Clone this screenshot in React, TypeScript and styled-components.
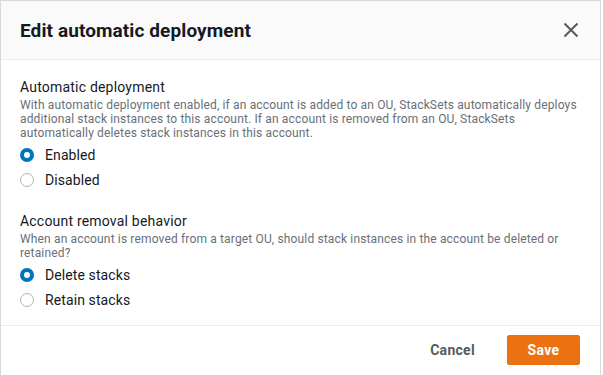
import { useState } from 'react';
import styled, { createGlobalStyle } from 'styled-components';

const TEXT = {
  title: 'Edit automatic deployment',
  deployLabel: 'Automatic deployment',
  deployHint:
    'With automatic deployment enabled, if an account is added to an OU, StackSets automatically deploys additional stack instances to this account. If an account is removed from an OU, StackSets automatically deletes stack instances in this account.',
  removalLabel: 'Account removal behavior',
  removalHint:
    'When an account is removed from a target OU, should stack instances in the account be deleted or retained?',
  cancel: 'Cancel',
  save: 'Save',
} as const;

const GlobalStyle = createGlobalStyle`
  body {
    margin: 0;
    background: #ffffff;
    font-family: Roboto, "Liberation Sans", sans-serif;
  }
`;

const Modal = styled.div`
  width: 601px;
  height: 375px;
  box-sizing: border-box;
  border: 1px solid #d5dbdb;
  border-bottom: none;
  background: #ffffff;
  display: flex;
  flex-direction: column;
`;

const Header = styled.header`
  height: 59px;
  box-sizing: border-box;
  display: flex;
  align-items: center;
  justify-content: space-between;
  padding: 0 21px 0 19px;
  background: #fafafa;
  border-bottom: 1px solid #eaeded;
`;

const Title = styled.h2`
  margin: 0;
  font-size: 19px;
  font-weight: 700;
  letter-spacing: 0.1px;
  color: #16191f;
`;

const CloseButton = styled.button`
  display: flex;
  padding: 0;
  border: none;
  background: none;
  color: #545b64;
  cursor: pointer;
`;

const Body = styled.div`
  padding: 17px 20px 0 19px;
  height: 266px;
  box-sizing: border-box;
  border-bottom: 1px solid #eaeded;
  display: flex;
  flex-direction: column;
  gap: 19px;
`;

const Field = styled.fieldset`
  margin: 0;
  padding: 0;
  border: none;
`;

const Label = styled.legend`
  padding: 0;
  font-size: 14px;
  line-height: 20px;
  letter-spacing: 0.2px;
  color: #16191f;
`;

const Hint = styled.p`
  margin: 1px 0 2px;
  font-size: 12px;
  line-height: 14px;
  letter-spacing: 0.15px;
  color: #687078;
`;

const Option = styled.label`
  display: flex;
  align-items: center;
  gap: 11px;
  height: 25px;
  font-size: 14px;
  letter-spacing: 0.1px;
  color: #16191f;
  cursor: pointer;
`;

const Dot = styled.span<{ $checked: boolean }>`
  width: 14px;
  height: 14px;
  box-sizing: border-box;
  border-radius: 50%;
  background: #ffffff;
  border: ${(p) => (p.$checked ? '4px solid #0073bb' : '1px solid #aab7b8')};
`;

const Footer = styled.footer`
  display: flex;
  justify-content: flex-end;
  align-items: center;
  gap: 12px;
  padding: 9px 20px 0;
`;

const LinkButton = styled.button`
  padding: 7px 20px;
  border: none;
  background: none;
  font-family: inherit;
  font-size: 14px;
  font-weight: 700;
  letter-spacing: 0.3px;
  color: #545b64;
  cursor: pointer;
`;

const PrimaryButton = styled.button`
  width: 73px;
  height: 30px;
  border: 1px solid #ec7211;
  border-radius: 2px;
  background: #ec7211;
  font-family: inherit;
  font-size: 14px;
  font-weight: 700;
  letter-spacing: 0.3px;
  color: #ffffff;
  cursor: pointer;
`;

type RadioGroupProps = {
  value: string;
  options: { value: string; label: string }[];
  onChange: (v: string) => void;
};

const RadioGroup = ({ value, options, onChange }: RadioGroupProps) => (
  <>
    {options.map((o) => (
      <Option key={o.value} onClick={() => onChange(o.value)}>
        <Dot $checked={value === o.value} />
        {o.label}
      </Option>
    ))}
  </>
);

export default function App() {
  const [deploy, setDeploy] = useState('enabled');
  const [removal, setRemoval] = useState('delete');

  return (
    <>
      <GlobalStyle />
      <Modal>
        <Header>
          <Title>{TEXT.title}</Title>
          <CloseButton type="button" aria-label="Close">
            <svg width="16" height="16" viewBox="0 0 16 16" fill="none">
              <path d="M1.5 1.5l13 13M14.5 1.5l-13 13" stroke="currentColor" strokeWidth="2" />
            </svg>
          </CloseButton>
        </Header>
        <Body>
          <Field>
            <Label>{TEXT.deployLabel}</Label>
            <Hint>{TEXT.deployHint}</Hint>
            <RadioGroup
              value={deploy}
              onChange={setDeploy}
              options={[
                { value: 'enabled', label: 'Enabled' },
                { value: 'disabled', label: 'Disabled' },
              ]}
            />
          </Field>
          <Field>
            <Label>{TEXT.removalLabel}</Label>
            <Hint>{TEXT.removalHint}</Hint>
            <RadioGroup
              value={removal}
              onChange={setRemoval}
              options={[
                { value: 'delete', label: 'Delete stacks' },
                { value: 'retain', label: 'Retain stacks' },
              ]}
            />
          </Field>
        </Body>
        <Footer>
          <LinkButton type="button">{TEXT.cancel}</LinkButton>
          <PrimaryButton type="button">{TEXT.save}</PrimaryButton>
        </Footer>
      </Modal>
    </>
  );
}
